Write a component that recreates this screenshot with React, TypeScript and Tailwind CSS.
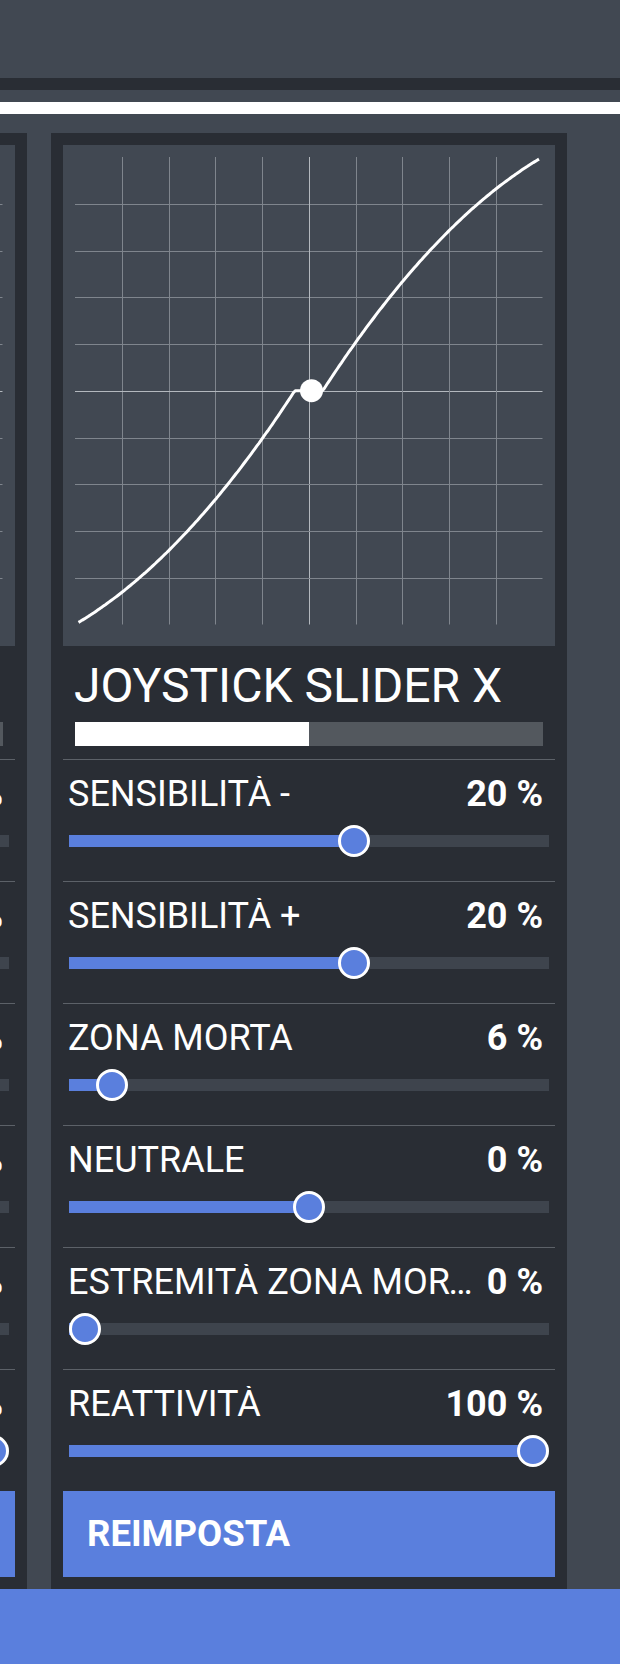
import React from "react";

type Row = { label: string; value: number; pos: number };

const rows: Row[] = [
  { label: "SENSIBILITÀ -", value: 20, pos: 0.6 },
  { label: "SENSIBILITÀ +", value: 20, pos: 0.6 },
  { label: "ZONA MORTA", value: 6, pos: 0.06 },
  { label: "NEUTRALE", value: 0, pos: 0.5 },
  { label: "ESTREMITÀ ZONA MORTA", value: 0, pos: 0 },
  { label: "REATTIVITÀ", value: 100, pos: 1 },
];

// grid box inside the chart svg
const G0 = 12;
const G1 = 479.5;
const C = (G0 + G1) / 2;
const H = (G1 - G0) / 2;

function curvePath() {
  const pts: string[] = [];
  const n = 240;
  for (let i = 0; i <= n; i++) {
    const x = -0.985 + (1.97 * i) / n;
    const u = Math.abs(x);
    const w = Math.max(0, (u - 0.06) / 0.94);
    const v = (w + 0.45 * w * (1 - w)) * Math.sign(x);
    pts.push(`${(C + x * H).toFixed(1)},${(C - v * H).toFixed(1)}`);
  }
  return "M" + pts.join(" L");
}

const Chart = () => {
  const lines = [1, 2, 3, 4, 5, 6, 7, 8, 9].map((k) => Math.round(G0 + ((G1 - G0) / 10) * k) + 0.5);
  return (
    <div className="h-[501px] w-full bg-[#414852]">
      <svg width="492" height="501" viewBox="0 0 492 501">
        {lines.map((p, i) => (
          <g key={p} stroke={i === 4 ? "#b3b8be" : "#7f858d"} strokeWidth="1">
            <line x1={G0} y1={p} x2={G1} y2={p} />
            <line x1={p} y1={G0} x2={p} y2={G1} />
          </g>
        ))}
        <path d={curvePath()} fill="none" stroke="#ffffff" strokeWidth="3" strokeLinejoin="round" />
        <circle cx="248.5" cy="245.7" r="11.5" fill="#ffffff" />
      </svg>
    </div>
  );
};

const Slider = ({ pos }: { pos: number }) => {
  const center = 16 + pos * 448;
  return (
    <div className="px-[6px]">
      <div className="relative h-8 flex items-center">
        <div className="relative h-3 w-full bg-[#3e444d]">
          <div className="absolute left-0 top-0 h-3 bg-[#5a7fdd]" style={{ width: center }} />
        </div>
        <div
          className="absolute top-0 h-8 w-8 rounded-full border-[3px] border-white bg-[#5a7fdd]"
          style={{ left: center - 16 }}
        />
      </div>
    </div>
  );
};

const SettingRow = ({ row }: { row: Row }) => (
  <div className="border-t border-[#5c6168] pt-[16px] pb-[24px]">
    <div className="flex items-center gap-3 pl-[5px] pr-[12px] text-[36px] leading-none text-white">
      <span className="min-w-0 flex-1 truncate">{row.label}</span>
      <span className="shrink-0 font-bold">{row.value} %</span>
    </div>
    <div className="mt-[13px]">
      <Slider pos={row.pos} />
    </div>
  </div>
);

const Panel = ({ title }: { title: string }) => (
  <div className="w-[516px] shrink-0 bg-[#292d34] p-3">
    <Chart />
    <div className="mt-4 h-12 pl-[11px] text-[48px] leading-none text-white whitespace-nowrap">{title}</div>
    <div className="mx-3 mt-3 flex h-6 bg-[#53585e]">
      <div className="h-6 w-1/2 bg-white" />
    </div>
    <div className="mt-[13px]">
      {rows.map((r) => (
        <SettingRow key={r.label} row={r} />
      ))}
    </div>
    <button className="flex h-[86px] w-full items-center bg-[#5a7fdd] px-6 text-[36.5px] font-bold text-white">
      REIMPOSTA
    </button>
  </div>
);

export default function App() {
  return (
    <div className="min-h-[1664px] w-[620px] overflow-hidden bg-[#414852] font-[family-name:Roboto,sans-serif]">
      <div className="h-[78px]" />
      <div className="h-3 bg-[#292d34]" />
      <div className="h-3" />
      <div className="h-3 bg-white" />
      <div className="h-[19px]" />
      <div className="-ml-[489px] flex gap-6">
        <Panel title="JOYSTICK SLIDER Y" />
        <Panel title="JOYSTICK SLIDER X" />
      </div>
      <div className="h-[76px] bg-[#5a7fdd]" />
    </div>
  );
}
